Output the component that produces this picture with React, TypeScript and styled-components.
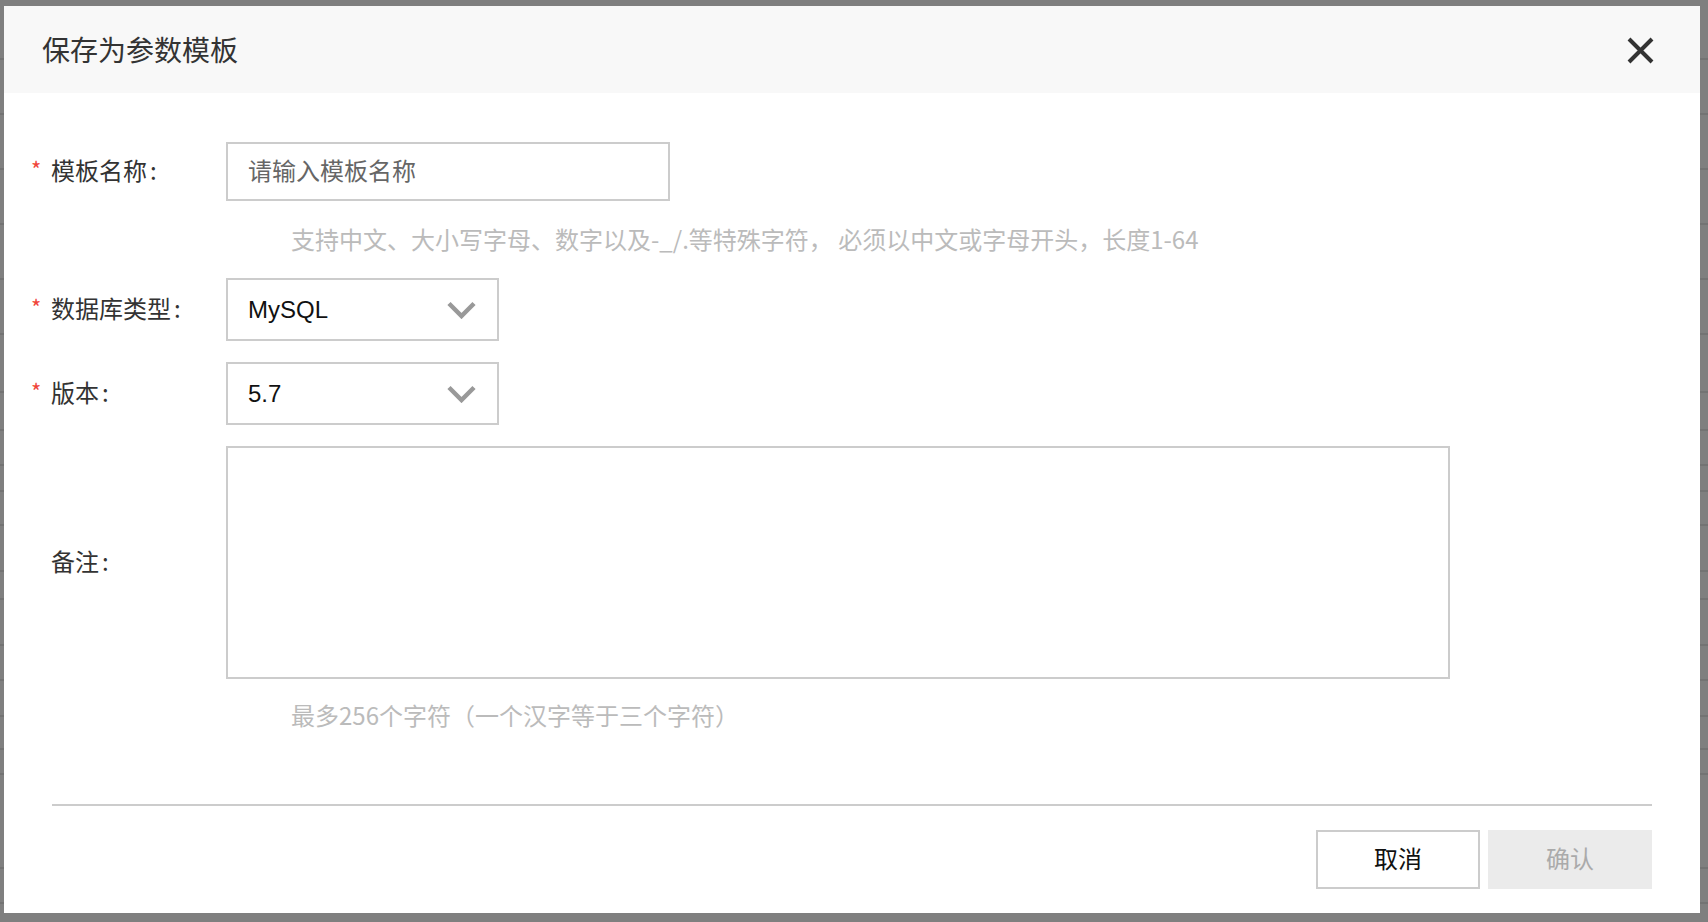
import React from "react";
import styled, { createGlobalStyle } from "styled-components";

const GlobalStyle = createGlobalStyle`
  html, body {
    margin: 0;
    padding: 0;
    width: 100%;
    height: 100%;
    overflow: hidden;
  }
  body {
    font-family: "Noto Sans CJK SC", "Noto Sans", sans-serif;
    background: #ffffff;
  }
  * { box-sizing: border-box; }
`;

const Screen = styled.div`
  position: relative;
  width: 100vw;
  height: 100vh;
  overflow: hidden;
  background: #ffffff;
`;

/* faux page that sits behind the modal mask */
const BackPage = styled.div`
  display: flex;
  flex-direction: column;
  width: 100%;
`;

const BackRow = styled.div<{ $h: number }>`
  height: ${(p) => p.$h}px;
  border-bottom: 2px solid #e6e6e6;
`;

const Mask = styled.div`
  position: absolute;
  inset: 0;
  background: rgba(0, 0, 0, 0.5);
`;

const Dialog = styled.div`
  position: absolute;
  left: 4px;
  top: 6px;
  width: 1696px;
  display: flex;
  flex-direction: column;
  background: #ffffff;
`;

const Header = styled.div`
  display: flex;
  align-items: center;
  justify-content: space-between;
  height: 87px;
  padding: 0 46px 0 38px;
  background: #f8f8f8;
`;

const Title = styled.div`
  font-size: 28px;
  color: #333333;
  margin-top: -2px;
`;

const CloseButton = styled.button`
  display: flex;
  align-items: center;
  justify-content: center;
  width: 27px;
  height: 27px;
  padding: 0;
  border: none;
  background: transparent;
  cursor: pointer;
  margin-top: 1px;
`;

const Body = styled.div`
  display: flex;
  flex-direction: column;
  padding: 49px 0 0 0;
`;

const Row = styled.div<{ $mb?: number }>`
  display: flex;
  align-items: center;
  margin-bottom: ${(p) => p.$mb ?? 0}px;
`;

const LabelCell = styled.div`
  display: flex;
  align-items: center;
  width: 222px;
  flex: none;
  padding-left: 27px;
  font-size: 24px;
  color: #333333;
  margin-top: -4px;
`;

const Star = styled.span<{ $show: boolean }>`
  display: inline-block;
  width: 20px;
  color: #f0453a;
  font-size: 22px;
  line-height: 1;
  transform: translateY(-2px);
  visibility: ${(p) => (p.$show ? "visible" : "hidden")};
`;

const Colon = styled.span`
  margin-left: 3px;
`;

const TextInput = styled.input`
  width: 444px;
  height: 59px;
  border: 2px solid #cccccc;
  padding: 0 0 4px 20px;
  font-family: "Noto Sans CJK SC", sans-serif;
  font-size: 24px;
  color: #333;
  outline: none;
  background: #fff;
  &::placeholder {
    color: #666666;
  }
`;

const Hint = styled.div<{ $mt: number; $mb: number }>`
  margin: ${(p) => p.$mt}px 0 ${(p) => p.$mb}px 287px;
  line-height: 36px;
  height: 36px;
  font-size: 24px;
  color: #bbbbbb;
  white-space: nowrap;
`;

const Select = styled.div`
  display: flex;
  align-items: center;
  justify-content: space-between;
  width: 273px;
  height: 63px;
  border: 2px solid #cccccc;
  padding: 0 21px 0 20px;
  background: #fff;
`;

const SelectValue = styled.span`
  font-family: "Liberation Sans", Arial, sans-serif;
  font-size: 24px;
  color: #111111;
`;

const TextArea = styled.textarea`
  width: 1224px;
  height: 233px;
  border: 2px solid #cccccc;
  resize: none;
  outline: none;
  font-family: "Noto Sans CJK SC", sans-serif;
  font-size: 24px;
  padding: 10px 20px;
`;

const Divider = styled.div`
  margin: 71px 48px 0 48px;
  height: 2px;
  background: #cccccc;
`;

const Footer = styled.div`
  display: flex;
  justify-content: flex-end;
  gap: 8px;
  padding: 24px 48px 24px 48px;
`;

const Button = styled.button<{ $variant: "default" | "disabled" }>`
  width: 164px;
  height: 59px;
  font-family: "Noto Sans CJK SC", sans-serif;
  font-size: 24px;
  padding: 0 0 5px 0;
  cursor: ${(p) => (p.$variant === "disabled" ? "not-allowed" : "pointer")};
  border: ${(p) => (p.$variant === "disabled" ? "none" : "2px solid #cccccc")};
  background: ${(p) => (p.$variant === "disabled" ? "#ebebeb" : "#ffffff")};
  color: ${(p) => (p.$variant === "disabled" ? "#aaaaaa" : "#111111")};
`;

const Chevron = () => (
  <svg width="29" height="18" viewBox="0 0 29 18">
    <polyline
      points="2,2.5 14.5,15 27,2.5"
      fill="none"
      stroke="#999999"
      strokeWidth="4.5"
    />
  </svg>
);

const CloseIcon = () => (
  <svg width="27" height="27" viewBox="0 0 27 27">
    <path d="M2 2 L25 25 M25 2 L2 25" stroke="#333333" strokeWidth="4" />
  </svg>
);

const backRows: number[] = [
  60, 55, 55, 55, 55, 55, 58, 38, 35, 26, 34, 46, 28, 46, 35, 36, 33, 25, 94,
  35, 34, 26,
];

export default function App() {
  return (
    <>
      <GlobalStyle />
      <Screen>
        <BackPage>
          {backRows.map((h, i) => (
            <BackRow key={i} $h={h} />
          ))}
        </BackPage>
        <Mask />
        <Dialog>
          <Header>
            <Title>保存为参数模板</Title>
            <CloseButton aria-label="关闭">
              <CloseIcon />
            </CloseButton>
          </Header>
          <Body>
            <Row>
              <LabelCell>
                <Star $show>*</Star>
                模板名称<Colon>:</Colon>
              </LabelCell>
              <TextInput placeholder="请输入模板名称" />
            </Row>
            <Hint $mt={20} $mb={21}>
              支持中文、大小写字母、数字以及-_/.等特殊字符， 必须以中文或字母开头，长度1-64
            </Hint>
            <Row $mb={21}>
              <LabelCell>
                <Star $show>*</Star>
                数据库类型<Colon>:</Colon>
              </LabelCell>
              <Select>
                <SelectValue>MySQL</SelectValue>
                <Chevron />
              </Select>
            </Row>
            <Row $mb={21}>
              <LabelCell>
                <Star $show>*</Star>
                版本<Colon>:</Colon>
              </LabelCell>
              <Select>
                <SelectValue>5.7</SelectValue>
                <Chevron />
              </Select>
            </Row>
            <Row>
              <LabelCell>
                <Star $show={false}>*</Star>
                备注<Colon>:</Colon>
              </LabelCell>
              <TextArea />
            </Row>
            <Hint $mt={18} $mb={0}>
              最多256个字符（一个汉字等于三个字符）
            </Hint>
          </Body>
          <Divider />
          <Footer>
            <Button $variant="default">取消</Button>
            <Button $variant="disabled">确认</Button>
          </Footer>
        </Dialog>
      </Screen>
    </>
  );
}
